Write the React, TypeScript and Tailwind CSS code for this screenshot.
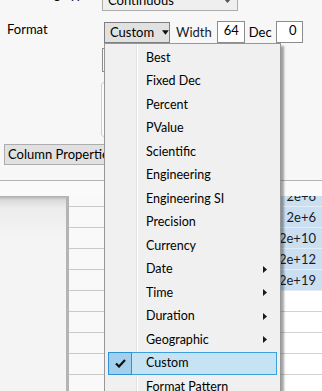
import React from "react";

type Item = { label: string; sub?: boolean; checked?: boolean };

const items: Item[] = [
  { label: "Best" },
  { label: "Fixed Dec" },
  { label: "Percent" },
  { label: "PValue" },
  { label: "Scientific" },
  { label: "Engineering" },
  { label: "Engineering SI" },
  { label: "Precision" },
  { label: "Currency" },
  { label: "Date", sub: true },
  { label: "Time", sub: true },
  { label: "Duration", sub: true },
  { label: "Geographic", sub: true },
  { label: "Custom", checked: true },
  { label: "Format Pattern" },
];

const values = ["2e+6", "2e+6", "2e+10", "2e+12", "2e+19", "", "", "", "", ""];

function SubArrow() {
  return (
    <svg width="4" height="7" viewBox="0 0 4 7" className="absolute right-[9px]">
      <path d="M0 0L4 3.5L0 7Z" fill="#1a1a1a" />
    </svg>
  );
}

function Check() {
  return (
    <svg width="11" height="9" viewBox="0 0 11 9">
      <path d="M1 4.5L4 7.5L10 1" stroke="#111" strokeWidth="2.2" fill="none" />
    </svg>
  );
}

export default function App() {
  return (
    <div className="relative h-[391px] w-[322px] overflow-hidden bg-[#f7f7f7] text-[13px] text-black font-['Lato','Noto_Sans',sans-serif]">
      {/* dialog */}
      <div className="flex h-[196px] flex-col">
        <div className="-mt-[14px] flex h-[25px]">
          <div className="w-[102px] pl-[7px] leading-[16px]">Modeling Type</div>
          <div className="relative flex w-[136px] items-end border border-[#adadad] bg-[#efefef] pb-[2px] pl-[5px] leading-[16px]">
            Continuous
            <svg width="7" height="4" viewBox="0 0 7 4" className="absolute right-[6px] top-[12px]">
              <path d="M0 0L7 0L3.5 4Z" fill="#555" />
            </svg>
          </div>
        </div>

        <div className="mt-[10px] flex h-[22px] items-start">
          <div className="w-[104px] pl-[7px] leading-[16px]">Format</div>
          <div className="mt-[1px] flex h-[21px] w-[66px] items-center border border-[#7f7f7f] bg-[#e1e1e1] pl-[5px]">
            <span>Custom</span>
            <svg width="8" height="5" viewBox="0 0 8 5" className="ml-[8px]">
              <path d="M0 0L8 0L4 5Z" fill="#111" />
            </svg>
          </div>
          <div className="ml-[6px] mt-[3px] leading-[16px] text-[#1a1a2a]">Width</div>
          <div className="ml-[5px] h-[22px] w-[28px] border border-[#8c8c8c] bg-white pr-[5px] text-right leading-[16px]">
            64
          </div>
          <div className="ml-[4px] mt-[3px] leading-[16px]">Dec</div>
          <div className="ml-[4px] h-[22px] w-[27px] border border-[#8c8c8c] bg-white pr-[5px] text-right leading-[16px]">
            0
          </div>
        </div>

        <div className="ml-[102px] mt-[5px] h-[24px] w-[40px] border border-[#8c8c8c] bg-[#fafafa]" />
        <div className="ml-[101px] mt-[10px] h-[55px] w-[80px] rounded-[3px] border border-[#d0d0d0] bg-[#fbfbfb]" />

        <div className="ml-[4px] mt-[7px] h-[21px] w-[120px] border border-[#adadad] bg-[#e1e1e1] pl-[3px] leading-[19px]">
          Column Properties
        </div>

        <div className="mt-[15px] h-[1px] bg-[#b4b4b4]" />
        <div className="flex-1 bg-[#fafafa]" />
      </div>

      {/* data table behind */}
      <div className="flex h-[195px] overflow-hidden">
        <div className="w-[67px] bg-[linear-gradient(to_bottom,#acacac_0px,#dadada_4px,#ececec_12px,#f4f4f4_40px)]" />
        <div className="w-[3px] bg-[#b4b4b4]" />
        <div className="-mt-[10px] flex w-[213px] flex-col">
          {values.map((_, i) => (
            <div key={i} className="h-[21px] shrink-0 border-b border-[#c9c9c9] bg-[#f9f9f9]" />
          ))}
        </div>
        <div className="-mt-[10px] flex flex-1 flex-col">
          {values.map((v, i) => (
            <div
              key={i}
              className={
                v
                  ? "h-[21px] shrink-0 border-b border-[#e4edf6] bg-[#cadff2] pr-[6px] text-right leading-[20px] text-[#1b1b1b]"
                  : "h-[21px] shrink-0 border-b border-[#d2d2d2] bg-white"
              }
            >
              {v}
            </div>
          ))}
        </div>
      </div>

      {/* format menu */}
      <div className="absolute left-[104px] top-[43px] h-[360px] w-[177px] border border-[#979797] bg-[#f0f0f0] px-[3px] pt-[2px] text-[12.5px] shadow-[3px_3px_2px_rgba(0,0,0,0.35)]">
        <div className="absolute bottom-0 left-[31px] top-0 w-[1px] bg-[#e2e2e2]" />
        <div className="absolute bottom-0 left-[32px] top-0 w-[1px] bg-white" />
        {items.map((it) => (
          <div
            key={it.label}
            className={
              it.checked
                ? "relative flex h-[23.5px] items-center border border-[#3d9fdb] bg-[#c6e3f4]"
                : "relative flex h-[23.5px] items-center border border-transparent"
            }
          >
            {it.checked ? (
              <div className="-my-[1px] -ml-[1px] flex h-[23.5px] w-[24px] items-center justify-center border border-[#2e92d6] bg-[#a2d0ec]">
                <Check />
              </div>
            ) : (
              <div className="w-[23px]" />
            )}
            <span className="ml-[14px] leading-[16px]">{it.label}</span>
            {it.sub && <SubArrow />}
          </div>
        ))}
      </div>
    </div>
  );
}
